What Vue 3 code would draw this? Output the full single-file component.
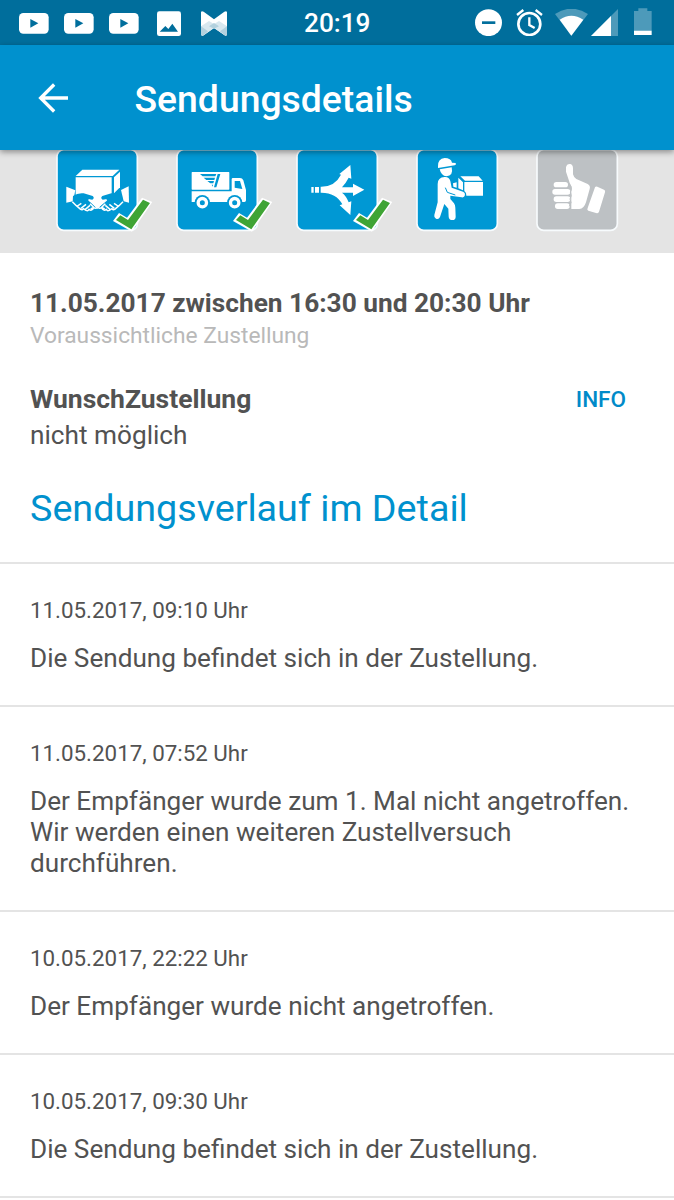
<template>
  <div class="screen">
    <div class="status-bar">
      <div class="status-left">
        <svg v-for="n in 3" :key="n" class="icon-video" viewBox="57 30 90 75">
          <rect x="57" y="36" width="89" height="62" rx="13" fill="#fff" />
          <path d="M91 54L115 67L91 80Z" fill="#006e9c" />
        </svg>
        <svg class="icon-image" viewBox="471 30 72 75">
          <rect x="471" y="31" width="72" height="74" rx="7" fill="#fff" />
          <path d="M479 92L496 75L505 84L517 68L534 92Z" fill="#006e9c" />
        </svg>
        <svg class="icon-m" viewBox="603 30 78 75">
          <path d="M603 34Q604 28 611 32L642 55L673 32Q680 28 681 34V100Q680 106 674 103L642 81L611 103Q604 106 603 100Z" fill="#fff" />
          <path d="M603 76L627 60L642 69L657 60L681 76V100Q680 106 674 103L642 81L611 103Q604 106 603 100Z" fill="#d9e8ef" />
          <path d="M603 76L624 91L611 103Q604 106 603 100ZM681 76L660 91L674 103Q680 106 681 100ZM627 76L642 66L657 76L642 83Z" fill="#b3d1de" />
        </svg>
      </div>
      <div class="time">20:19</div>
      <div class="status-right">
        <svg class="icon-dnd" viewBox="584 27 81 82">
          <circle cx="624.500" cy="68" r="40.500" fill="#fff" />
          <rect x="605" y="64" width="40" height="8" fill="#006e9c" />
        </svg>
        <svg class="icon-alarm" viewBox="706 27 81 82">
          <circle cx="746" cy="72" r="33" fill="none" stroke="#fff" stroke-width="8" />
          <path d="M746 52V75L762 84M709 45L728 30M784 45L765 30" fill="none" stroke="#fff" stroke-width="7" />
        </svg>
        <svg class="icon-wifi" viewBox="824 27 99 82">
          <path d="M824 42Q873 10 923 42L873 107Z" fill="#4d9aba" />
          <path d="M838 59Q873 36 909 59L873 107Z" fill="#fff" />
        </svg>
        <svg class="icon-signal" viewBox="933 27 81 82">
          <path d="M1014 27V108H933Z" fill="#4d9aba" />
          <path d="M993 48V108H933Z" fill="#fff" />
        </svg>
        <svg class="icon-battery" viewBox="1062 24 54 84">
          <path d="M1062 33H1075V25H1102V33H1115V92H1062Z" fill="#4d9aba" />
          <rect x="1062" y="92" width="53" height="13" fill="#fff" />
        </svg>
      </div>
    </div>

    <div class="app-bar">
      <svg class="back" viewBox="113 112 91 90">
        <path d="M204 157H121M162 116L121 157L162 198" fill="none" stroke="#fff" stroke-width="10" />
      </svg>
      <h1>Sendungsdetails</h1>
    </div>

    <div class="progress">
      <svg v-for="step in steps" :key="step.icon" class="step" viewBox="36 30 360 309">
        <rect x="36" y="29" width="241" height="242" rx="20" :fill="step.active ? '#0098d4' : '#bdc1c4'" stroke="#f7fbfd" stroke-width="5" />

        <g v-if="step.icon === 'parcel'" fill="#fff">
          <path d="M92 108L112 89H223L203 108Z" />
          <path d="M92 112H200V162L180 184L157 207L134 184L92 164Z" />
          <path d="M207 112L225 95V142L207 160Z" />
          <path d="M64 140L91 151L84 184L64 188Z" />
          <path d="M251 139L228 150L236 184L252 188Z" />
          <path d="M84 168Q98 158 116 160L143 168Q150 174 142 179L129 177L140 188L130 200L97 199L83 186Z" fill="#0098d4" />
          <path d="M231 168Q217 158 199 160L172 168Q165 174 173 179L187 177L176 188L186 200L218 199L234 186Z" fill="#0098d4" />
          <path d="M82 185L94 197L107 208Q112 211 115 206L123 211Q130 214 132 208Q138 213 143 208L146 203Q153 207 157 201L131 180M97 198L109 190M108 205L123 193M121 208L135 196M137 207L146 202L135 191" fill="none" stroke="#fff" stroke-width="4.500" stroke-linejoin="round" />
          <path d="M234 185L222 197L209 208Q204 211 201 206L193 211Q186 214 184 208Q178 213 173 208L170 203Q163 207 159 201L185 180M219 198L207 190M208 205L193 193M195 208L181 196M179 207L170 202L181 191" fill="none" stroke="#fff" stroke-width="4.500" stroke-linejoin="round" />
        </g>

        <g v-else-if="step.icon === 'truck'">
          <rect x="80" y="96" width="113" height="53" rx="2" fill="#fff" />
          <path d="M80 154H200V118Q200 114 204 114H225Q232 114 235 121L243 150V181Q243 186 238 186H80Z" fill="#fff" />
          <path d="M209 123H225L232 147L209 143Z" fill="#0098d4" />
          <path d="M105 102H154L151 109H113ZM116 113H150L148 120H124ZM127 123H147L145 130H136ZM140 134H144L143 140ZM158 102H166L154 142H147Z" fill="#0098d4" />
          <circle cx="112" cy="188" r="23" fill="#0098d4" />
          <circle cx="209" cy="188" r="23" fill="#0098d4" />
          <circle cx="112" cy="188" r="12.500" fill="none" stroke="#fff" stroke-width="10" />
          <circle cx="209" cy="188" r="12.500" fill="none" stroke="#fff" stroke-width="10" />
        </g>

        <g v-else-if="step.icon === 'split'" fill="#fff">
          <path d="M79 141H86V158H79ZM90 141H102V158H90Z" />
          <path d="M107 140Q149 141 168 104L163 102L196 75L199 116L191 113Q181 132 171 142H204V131L238 149L204 168V158H171Q184 168 191 187L199 184L196 225L164 196L172 193Q153 157 107 158Z" />
        </g>

        <g v-else-if="step.icon === 'courier'" fill="#fff">
          <path d="M99 79Q98 56 119 54Q138 54 141 68L152 69Q155 74 149 76L99 84Z" />
          <path d="M104 88L140 82Q146 107 124 109Q109 108 104 88Z" />
          <path d="M119 111Q132 110 136 123L140 143L174 155Q182 158 179 168Q176 173 170 172L136 167V177L147 190Q151 195 151 203L152 230Q152 240 142 240Q132 240 131 230L130 206L118 192L105 231Q101 240 93 236Q86 232 88 225L98 187V132Q98 112 119 111Z" />
          <path d="M121 143L127 157L151 165" fill="none" stroke="#0098d4" stroke-width="3" />
          <path d="M166 109H221L233 122H180ZM178 126H234V167H184Q185 158 178 153ZM160 113L174 127V151L160 145ZM144 130L155 127V143L145 140Z" />
        </g>

        <g v-else fill="#fff">
          <path d="M123 82Q125 71 136 72Q144 74 144 85V103Q146 112 154 117L188 132Q197 137 194 147L183 187Q177 206 163 207H139V139Q134 131 131 119L123 95Z" />
          <rect x="86" y="126" width="43" height="16" rx="8" />
          <rect x="82" y="147" width="54" height="17" rx="8" />
          <rect x="86" y="169" width="50" height="17" rx="8" />
          <rect x="90" y="190" width="44" height="17" rx="8" />
          <path d="M133 132Q144 144 136 156Q142 168 135 177Q142 188 133 199" fill="none" stroke="#bdc1c4" stroke-width="3" />
          <path d="M210 142Q212 138 217 140L237 149Q242 151 240 157L222 215Q219 221 213 219L190 212Q185 210 188 204Z" />
        </g>

        <path v-if="step.done" d="M204 243L222 219L246 233L291 173L322 186L261 275Z" fill="#fff" />
        <path v-if="step.done" d="M213 240L226 226L249 240L294 179L315 189L259 268Z" fill="#3fa435" />
      </svg>
    </div>

    <div class="summary">
      <div class="delivery-date">11.05.2017 zwischen 16:30 und 20:30 Uhr</div>
      <div class="delivery-hint">Voraussichtliche Zustellung</div>
      <div class="option">
        <div>
          <div class="option-title">WunschZustellung</div>
          <div class="option-value">nicht möglich</div>
        </div>
        <a class="info">INFO</a>
      </div>
      <h2>Sendungsverlauf im Detail</h2>
    </div>

    <div class="history">
      <div v-for="entry in history" :key="entry.date" class="entry">
        <div class="entry-date">{{ entry.date }}</div>
        <div class="entry-text">{{ entry.text }}</div>
      </div>
    </div>
  </div>
</template>

<script setup>
import { ref } from 'vue'

const steps = ref([
  { icon: 'parcel', active: true, done: true },
  { icon: 'truck', active: true, done: true },
  { icon: 'split', active: true, done: true },
  { icon: 'courier', active: true, done: false },
  { icon: 'thumb', active: false, done: false }
])

const history = ref([
  { date: '11.05.2017, 09:10 Uhr', text: 'Die Sendung befindet sich in der Zustellung.' },
  {
    date: '11.05.2017, 07:52 Uhr',
    text: 'Der Empfänger wurde zum 1. Mal nicht angetroffen. Wir werden einen weiteren Zustellversuch durchführen.'
  },
  { date: '10.05.2017, 22:22 Uhr', text: 'Der Empfänger wurde nicht angetroffen.' },
  { date: '10.05.2017, 09:30 Uhr', text: 'Die Sendung befindet sich in der Zustellung.' }
])
</script>

<style>
body {
  background: #fff;
}
</style>

<style scoped>
.screen {
  height: 1200px;
  overflow: hidden;
  background: #fff;
  color: #525252;
  font-family: Roboto, "Liberation Sans", sans-serif;
}

.screen svg {
  display: block;
  flex-shrink: 0;
}

.status-bar {
  display: grid;
  grid-template-columns: 304px 1fr 199.500px;
  height: 45px;
  background: #006e9c;
  color: #fff;
}

.status-left {
  display: flex;
  align-items: center;
  padding-left: 19px;
}

.icon-video {
  width: 30px;
  height: 25px;
  margin-right: 15px;
}

.icon-image {
  width: 24px;
  height: 25px;
  margin: 0 20px 0 3px;
}

.icon-m {
  width: 26px;
  height: 25px;
}

.time {
  font-size: 26.2px;
  font-weight: 500;
  line-height: 47px;
}

.status-right {
  display: flex;
  align-items: flex-start;
  padding-top: 9px;
}

.icon-dnd,
.icon-alarm,
.icon-signal {
  width: 27px;
  height: 27.3px;
}

.icon-dnd {
  margin-right: 14px;
}

.icon-alarm {
  margin-right: 12px;
}

.icon-wifi {
  width: 33px;
  height: 27.3px;
  margin-right: 3px;
}

.icon-battery {
  width: 18px;
  height: 28px;
  margin: -1px 0 0 16px;
}

.app-bar {
  position: relative;
  z-index: 1;
  display: flex;
  align-items: center;
  height: 105px;
  padding-left: 37.500px;
  box-sizing: border-box;
  background: #0091ce;
  color: #fff;
  box-shadow: 0 2px 6px rgba(0, 0, 0, 0.4);
}

.back {
  width: 30px;
  height: 30px;
}

.app-bar h1 {
  margin: 2px 0 0 67px;
  font-size: 37.35px;
  font-weight: 500;
}

.progress {
  display: flex;
  height: 103px;
  padding-left: 57px;
  background: #e4e4e4;
}

.progress .step {
  width: 120px;
  height: 103px;
  overflow: visible;
}

.summary {
  height: 309px;
  padding: 34px 30px 0;
  box-sizing: border-box;
}

.delivery-date,
.option-title {
  font-size: 26.25px;
  font-weight: 700;
  line-height: 32px;
}

.option-title {
  font-size: 26.5px;
}

.delivery-hint {
  margin-top: 3px;
  color: #b9b9b9;
  font-size: 22.75px;
  line-height: 28px;
}

.option {
  display: flex;
  justify-content: space-between;
  margin-top: 33px;
}

.option-value {
  margin-top: 4px;
  font-size: 26.2px;
  line-height: 32px;
}

.info {
  margin-right: 18px;
  color: #008ac9;
  font-size: 22.5px;
  font-weight: 500;
  line-height: 32px;
}

.summary h2 {
  margin: 32px 0 0;
  color: #0091ce;
  font-size: 37.7px;
  font-weight: 400;
  line-height: 50px;
}

.entry {
  padding: 32px 30px 31.4px;
  border-top: 2px solid #e4e4e4;
}

.entry:last-child {
  border-bottom: 2px solid #e4e4e4;
}

.entry-date {
  margin-bottom: 19px;
  font-size: 22.35px;
  line-height: 28px;
}

.entry-text {
  font-size: 26.15px;
  line-height: 30.7px;
}
</style>
